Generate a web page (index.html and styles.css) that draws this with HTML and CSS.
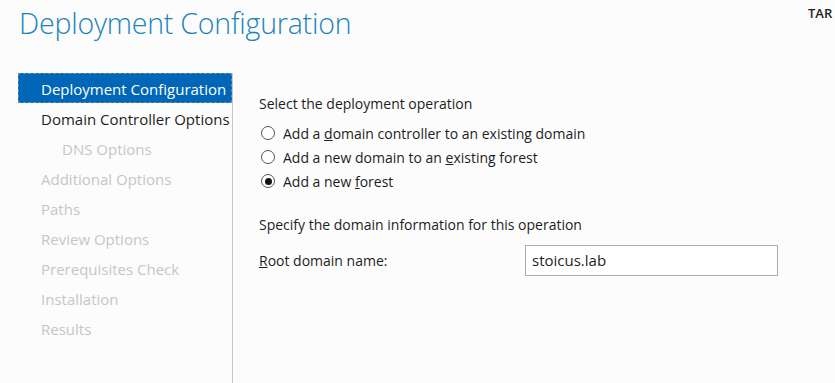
FILE: index.html
```html
<!DOCTYPE html>
<html lang="en">
<head>
    <meta charset="UTF-8">
    <title>Deployment Configuration</title>
    <link rel="stylesheet" href="styles.css">
</head>
<body>
    <div class="header">
        <h1 class="title">Deployment Configuration</h1>
        <span class="target">TAR</span>
    </div>
    <div class="main">
        <div class="nav">
            <div class="nav-item selected">Deployment Configuration</div>
            <div class="nav-item">Domain Controller Options</div>
            <div class="nav-item disabled sub">DNS Options</div>
            <div class="nav-item disabled">Additional Options</div>
            <div class="nav-item disabled">Paths</div>
            <div class="nav-item disabled">Review Options</div>
            <div class="nav-item disabled">Prerequisites Check</div>
            <div class="nav-item disabled">Installation</div>
            <div class="nav-item disabled">Results</div>
        </div>
        <div class="content">
            <div class="section-label">Select the deployment operation</div>
            <div class="radios">
                <label class="radio"><span class="dot"></span><span>Add a <u>d</u>omain controller to an existing domain</span></label>
                <label class="radio"><span class="dot"></span><span>Add a new domain to an <u>e</u>xisting forest</span></label>
                <label class="radio"><span class="dot checked"></span><span>Add a new <u>f</u>orest</span></label>
            </div>
            <div class="section-label second">Specify the domain information for this operation</div>
            <div class="field">
                <span class="field-label"><u>R</u>oot domain name:</span>
                <div class="textbox">stoicus.lab</div>
            </div>
        </div>
    </div>
</body>
</html>
```

FILE: styles.css
```css
body {
    margin: 0;
    background-color: #fcfcfc;
    color: #1e1e1e;
    font-family: "Open Sans", "Noto Sans", sans-serif;
    overflow: hidden;
    height: 383px;
}

.header {
    display: flex;
    height: 73px;
    white-space: nowrap;
}

.title {
    flex: 1;
    margin: 0;
    padding: 4px 0 0 19px;
    font-size: 28.5px;
    font-weight: 300;
    color: #1a84b8;
    letter-spacing: -0.2px;
}

.target {
    width: 27px;
    padding-top: 4px;
    font-size: 13px;
    font-weight: 600;
    color: #1e1e1e;
}

.main {
    display: flex;
    height: 310px;
}

.nav {
    width: 214px;
    margin-left: 18px;
    border-right: 1px solid #c8c8c8;
}

.nav-item {
    height: 30px;
    line-height: 32px;
    padding-left: 23px;
    font-size: 15px;
    white-space: nowrap;
}

.nav-item.selected {
    background-color: #0067b8;
    color: white;
    outline: 1px dashed #6b8fb0;
    outline-offset: -1px;
}

.nav-item.sub {
    padding-left: 44px;
}

.nav-item.disabled {
    color: #c6c6c6;
}

.content {
    padding-left: 26px;
    padding-top: 21px;
    font-size: 14px;
}

.section-label {
    line-height: 20px;
}

.section-label.second {
    margin-top: 22px;
}

.radios {
    margin-top: 7px;
}

.radio {
    display: flex;
    align-items: center;
    height: 24px;
    padding-left: 2px;
    white-space: pre;
}

.dot {
    width: 12px;
    height: 12px;
    border: 1px solid #555;
    border-radius: 50%;
    background: white;
    margin-right: 8px;
    display: flex;
    align-items: center;
    justify-content: center;
}

.dot.checked::after {
    content: "";
    width: 7px;
    height: 7px;
    border-radius: 50%;
    background: #111;
}

.field {
    display: flex;
    align-items: center;
    margin-top: 10px;
}

.field-label {
    width: 266px;
}

.textbox {
    width: 245px;
    height: 29px;
    line-height: 29px;
    border: 1px solid #abadb3;
    background: white;
    padding-left: 6px;
    font-size: 15px;
}
```
